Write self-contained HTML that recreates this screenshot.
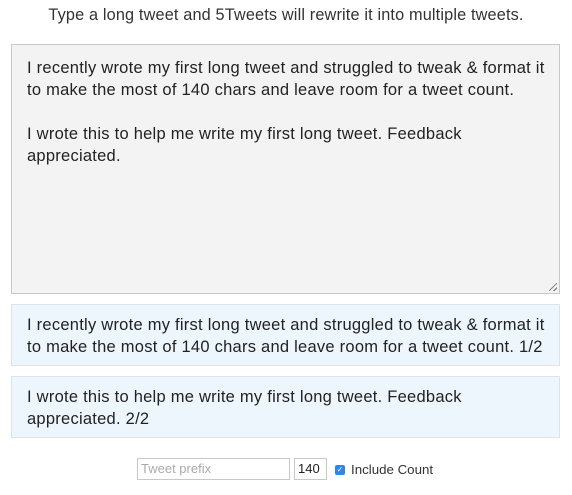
<!DOCTYPE html>
<html><head><style>
body{margin:0;width:572px;height:495px;background:#fff;font-family:"Liberation Sans",sans-serif;color:#333;position:relative;overflow:hidden}
.t{position:absolute;top:6px;left:0;width:572px;text-align:center;font-size:16.3px;letter-spacing:0.15px;color:#333}
.ta{position:absolute;left:11px;top:44px;width:547px;height:248px;border:1px solid #c8c8c8;background:#f3f3f3;box-sizing:content-box}
.tx{position:absolute;left:15px;top:12px;font-size:16.5px;letter-spacing:0.25px;line-height:22px;color:#222;white-space:nowrap}
.o{position:absolute;left:11px;width:547px;height:60px;border:1px solid #dde3e8;background:#eef6fd}
.grip{position:absolute;right:2px;bottom:2px;width:8px;height:8px;background:linear-gradient(135deg,transparent 45%,#888 45%,#888 55%,transparent 55%,transparent 75%,#888 75%,#888 85%,transparent 85%)}
.in{position:absolute;top:458px;height:22px;border:1px solid #c8c8c8;box-sizing:border-box;font-size:13px;line-height:20px;padding-left:3px}
</style></head><body>
<div class="t">Type a long tweet and 5Tweets will rewrite it into multiple tweets.</div>
<div class="ta"><div class="tx">I recently wrote my first long tweet and struggled to tweak &amp; format it<br>to make the most of 140 chars and leave room for a tweet count.<br><br>I wrote this to help me write my first long tweet. Feedback<br>appreciated.</div><div class="grip"></div></div>
<div class="o" style="top:304px"><div class="tx" style="top:9px">I recently wrote my first long tweet and struggled to tweak &amp; format it<br>to make the most of 140 chars and leave room for a tweet count. 1/2</div></div>
<div class="o" style="top:376px"><div class="tx" style="top:9px">I wrote this to help me write my first long tweet. Feedback<br>appreciated. 2/2</div></div>
<div class="in" style="left:137px;width:153px;color:#aaa">Tweet prefix</div>
<div class="in" style="left:294px;width:33px;color:#222">140</div>
<div style="position:absolute;left:335px;top:465px;width:10px;height:10px;background:#2f86e6;border-radius:2px;color:#fff;font-size:8px;line-height:10px;text-align:center">✓</div>
<div style="position:absolute;left:351px;top:462px;font-size:13.3px;color:#333">Include Count</div>
</body></html>
